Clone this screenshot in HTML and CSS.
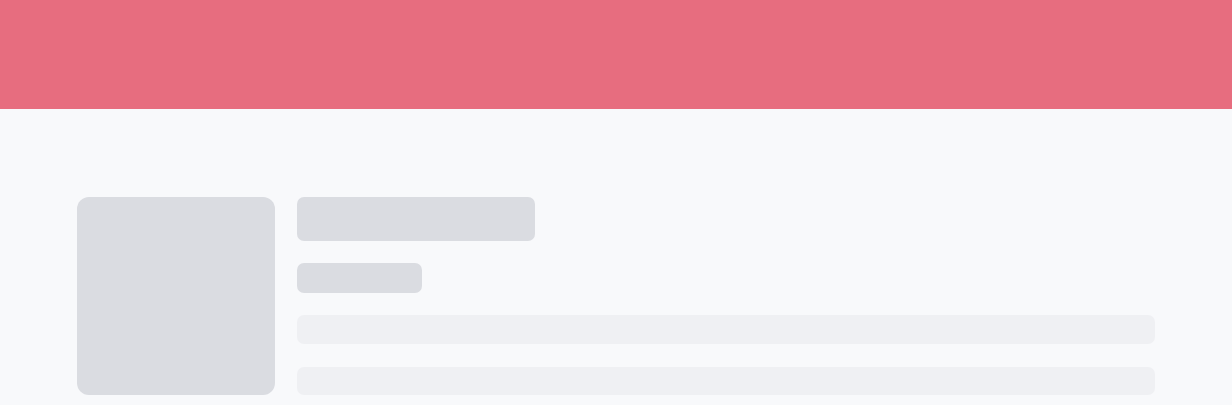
FILE: index.html
```html
<!DOCTYPE html>
<html lang="en">
<head>
<meta charset="utf-8">
<title>Loading</title>
<link rel="stylesheet" href="styles.css">
</head>
<body>
<header class="hero"></header>
<main class="page">
  <div class="item">
    <div class="thumb"></div>
    <div class="info">
      <div class="bar title"></div>
      <div class="bar sub"></div>
      <div class="bar line"></div>
      <div class="bar line"></div>
    </div>
  </div>
</main>
</body>
</html>
```
FILE: styles.css
```css
html, body {
  margin: 0;
  padding: 0;
  background: #f8f9fb;
  font-family: "Liberation Sans", Arial, sans-serif;
  overflow: hidden;
}
.hero {
  height: 109px;
  background: #e76d7f;
}
.page {
  padding: 88px 77px 0;
}
.item {
  display: flex;
  gap: 22px;
  align-items: flex-start;
}
.thumb {
  flex: 0 0 198px;
  height: 198px;
  border-radius: 12px;
  background: #dadce1;
}
.info {
  flex: 1;
  display: flex;
  flex-direction: column;
  gap: 22px;
}
.bar {
  border-radius: 7px;
}
.title {
  width: 238px;
  height: 44px;
  background: #dadce1;
}
.sub {
  width: 125px;
  height: 30px;
  background: #dadce1;
}
.line {
  height: 29px;
  background: #eff0f3;
}
.line + .line {
  margin-top: 1px;
  height: 28px;
}
```
